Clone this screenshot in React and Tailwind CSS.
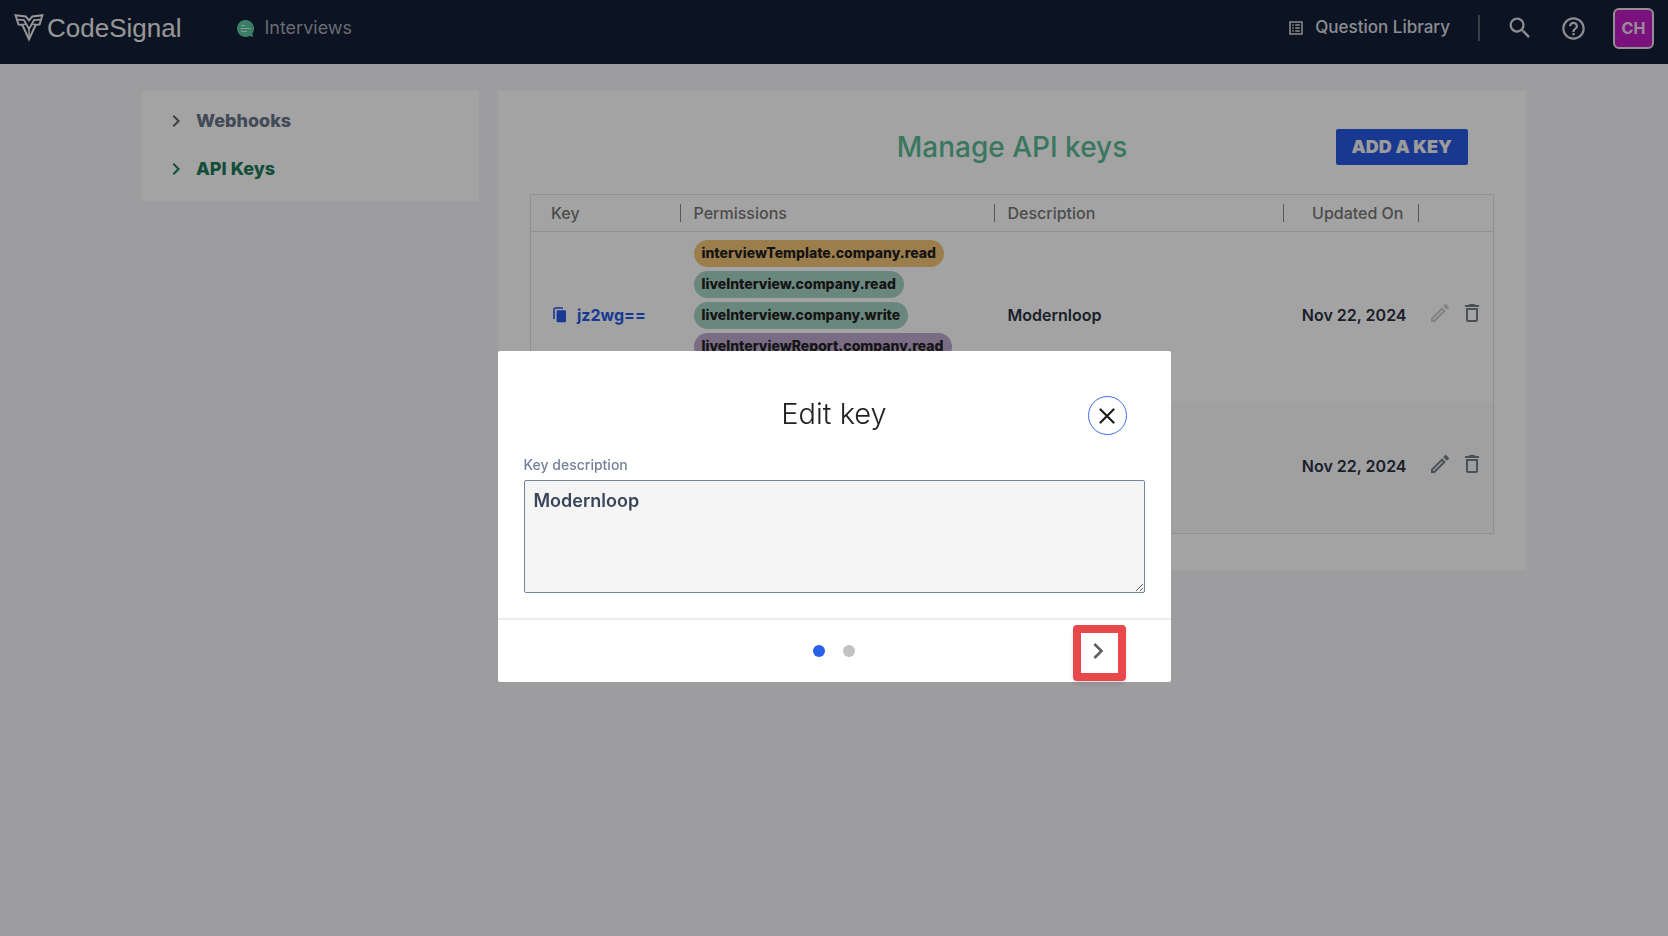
import React from 'react';
import { MdChevronRight, MdDeleteOutline, MdHelpOutline, MdOutlineEdit, MdOutlineListAlt, MdSearch } from 'react-icons/md';

const keys = [
  {
    id: 'jz2wg==',
    description: 'Modernloop',
    updatedOn: 'Nov 22, 2024',
    editDisabled: true,
    permissions: [
      { name: 'interviewTemplate.company.read', color: 'bg-[#f3c578]' },
      { name: 'liveInterview.company.read', color: 'bg-[#a6d3c4]' },
      { name: 'liveInterview.company.write', color: 'bg-[#a6d3c4]' },
      { name: 'liveInterviewReport.company.read', color: 'bg-[#bda9cf]' },
    ],
  },
  { id: '', description: '', updatedOn: 'Nov 22, 2024', permissions: [] },
];

function Logo() {
  return (
    <a href="#home" className="flex items-center gap-[3px] text-[#ececec]">
      <svg viewBox="0 0 30 28" className="h-7 w-[30px]" fill="none" stroke="currentColor" strokeWidth="2" aria-hidden="true">
        <path d="M1.6 1.2 L11.6 2.4 L15 6.4 L18.4 2.4 L28.4 1.2 L25.6 10.4 L21.6 11 L15 25.4 L8.4 11 L4.4 10.4 Z" />
        <path d="M3.4 5.6 L10 6.2 L15 15 L20 6.2 L26.6 5.6" strokeWidth="1.8" />
        <path d="M8 10.6 L12.2 10.2 M22 10.6 L17.8 10.2 M15 14.6 V24" strokeWidth="1.5" />
      </svg>
      <span className="font-['Liberation_Sans',sans-serif] text-[26px] leading-7">CodeSignal</span>
    </a>
  );
}

function Navbar() {
  return (
    <header className="flex h-16 items-start justify-between bg-[#141e36] px-[14px]">
      <div className="flex h-14 items-center gap-14">
        <Logo />
        <a href="#interviews" className="flex items-center gap-[10px] text-lg text-[#a3a7b3]">
          <svg viewBox="0 0 17 17" className="size-[17px]" aria-hidden="true">
            <path d="M8.5 0a8.5 8.5 0 1 0 4 16L16 17l-.6-3.6A8.5 8.5 0 0 0 8.5 0Z" fill="#5cc5a0" />
            <path d="M4 5.5h4M3.5 8.5h10M4 11.5h6" stroke="#d3efe5" strokeWidth="1.2" />
          </svg>
          Interviews
        </a>
      </div>
      <div className="flex h-14 items-center text-[#dcdde0]">
        <a href="#library" className="flex items-center gap-[10px] text-[17px] font-medium">
          <MdOutlineListAlt className="size-[18px]" />
          Question Library
        </a>
        <span className="ml-7 h-[26px] w-[2px] bg-[#5b6273]" />
        <button type="button" aria-label="Search" className="ml-[26px]">
          <MdSearch className="size-7" />
        </button>
        <button type="button" aria-label="Help" className="ml-[26px]">
          <MdHelpOutline className="size-[27px]" />
        </button>
        <button
          type="button"
          className="ml-[26px] size-[41px] rounded-md border-2 border-[#e4dfe6] bg-[#bf1cc2] text-base font-bold text-[#eedcf0]"
        >
          CH
        </button>
      </div>
    </header>
  );
}

function Sidebar() {
  return (
    <nav className="flex w-[337px] shrink-0 flex-col gap-5 self-start bg-white px-[22px] pt-4 pb-[18px] text-lg leading-7 font-extrabold">
      <a href="#webhooks" className="flex items-center gap-2 text-[#68748a]">
        <MdChevronRight className="size-6 text-[#5d636e]" />
        Webhooks
      </a>
      <a href="#api-keys" className="flex items-center gap-2 text-[#1f7a58]">
        <MdChevronRight className="size-6" />
        API Keys
      </a>
    </nav>
  );
}

function HeaderCell({ children, className }) {
  return (
    <th scope="col" className="h-[37px] p-0 font-medium">
      <div className={`flex h-[18px] items-center border-r border-[#8a8a8a] ${className}`}>{children}</div>
    </th>
  );
}

function KeysTable() {
  return (
    <table className="w-full table-fixed border-collapse border border-[#e2e2e2] text-left text-base leading-6 text-[#2a3140]">
      <colgroup>
        <col className="w-[150px]" />
        <col className="w-[314px]" />
        <col />
        <col className="w-[135px]" />
        <col className="w-[75px]" />
      </colgroup>
      <thead className="border-b border-[#e2e2e2] text-[#777777]">
        <tr>
          <HeaderCell className="pl-5">Key</HeaderCell>
          <HeaderCell className="pl-[13px]">Permissions</HeaderCell>
          <HeaderCell className="pl-[13px]">Description</HeaderCell>
          <HeaderCell className="justify-end pr-[14px]">Updated On</HeaderCell>
          <th aria-label="Actions" />
        </tr>
      </thead>
      <tbody>
        {keys.map((k, i) => (
          <tr key={i} className={i % 2 === 0 ? 'h-[171px]' : 'h-[131px] bg-[#fafafa]'}>
            <td className="pb-1 pl-[22px]">
              {k.id && (
                <a href="#key" className="flex items-center gap-[10px] font-bold text-[#2459e8]">
                  <svg viewBox="0 0 14 16" className="h-4 w-[14px]" aria-hidden="true">
                    <path d="M1 12V2.5Q1 1 2.5 1H10" fill="none" stroke="currentColor" strokeWidth="1.6" />
                    <rect x="3.6" y="3.2" width="9.4" height="12" rx="1.2" fill="currentColor" />
                  </svg>
                  {k.id}
                </a>
              )}
            </td>
            <td className="pt-2 pl-[13px] align-top">
              <ul className="flex flex-col items-start gap-1">
                {k.permissions.map((p) => (
                  <li key={p.name} className={`h-[27px] rounded-full px-2 text-sm leading-[26px] font-extrabold text-[#222222] ${p.color}`}>
                    {p.name}
                  </li>
                ))}
              </ul>
            </td>
            <td className="pb-1 pl-[13px] font-semibold">{k.description}</td>
            <td className="pr-3 pb-1 text-right font-semibold">{k.updatedOn}</td>
            <td>
              <div className="flex items-center justify-center gap-2 pb-2 text-[#777e8b]">
                <button type="button" aria-label="Edit key" disabled={k.editDisabled} className="disabled:text-[#cbcbcb]">
                  <MdOutlineEdit className="size-6" />
                </button>
                <button type="button" aria-label="Delete key">
                  <MdDeleteOutline className="size-6" />
                </button>
              </div>
            </td>
          </tr>
        ))}
      </tbody>
    </table>
  );
}

function EditKeyModal() {
  return (
    <div className="fixed inset-0 flex items-start justify-center bg-black/36 pt-[351px]">
      <div role="dialog" aria-labelledby="edit-title" className="w-full max-w-[673px] rounded-xs bg-white">
        <div className="px-[26px] pt-[45px] pb-[25px]">
          <div className="grid grid-cols-[1fr_auto_1fr] items-center">
            <h2 id="edit-title" className="col-start-2 pb-[3px] text-[29px] leading-9 font-light text-[#222222]">
              Edit key
            </h2>
            <button
              type="button"
              aria-label="Close"
              className="mr-[18px] flex size-[39px] items-center justify-center justify-self-end rounded-full border border-[#3f6fe8]"
            >
              <svg viewBox="0 0 16 16" className="size-4" fill="none" stroke="#1d1d1d" strokeWidth="2.2" strokeLinecap="round" aria-hidden="true">
                <path d="M1.5 1.5l13 13M14.5 1.5l-13 13" />
              </svg>
            </button>
          </div>
          <label htmlFor="description" className="mt-5 mb-[5px] block text-sm leading-5 font-medium text-[#74809a]">
            Key description
          </label>
          <textarea
            id="description"
            defaultValue="Modernloop"
            className="block h-[113px] w-full resize rounded-xs border border-[#75849f] bg-[#f5f5f5] px-[9px] py-2 text-lg leading-6 font-semibold text-[#39455a]"
          />
        </div>
        <footer className="grid h-16 grid-cols-[1fr_auto_1fr] items-center border-t-2 border-[#ececec]">
          <div className="col-start-2 flex gap-[18px]">
            <span className="size-3 rounded-full bg-[#2a5fea]" />
            <span className="size-3 rounded-full bg-[#c2c2c2]" />
          </div>
          <button
            type="button"
            aria-label="Next"
            className="mt-[3px] mr-[45px] flex h-14 w-[53px] items-center justify-center justify-self-end rounded-sm border-8 border-[#e8474c] pr-[2px] pb-1 text-[#5f5f5f] shadow-md"
          >
            <MdChevronRight className="size-8 shrink-0" />
          </button>
        </footer>
      </div>
    </div>
  );
}

export default function App() {
  return (
    <div className="min-h-screen bg-[#f6f6f9] font-['Inter',sans-serif]">
      <Navbar />
      <main className="mx-auto flex max-w-[1384px] gap-[19px] pt-[27px]">
        <Sidebar />
        <section className="min-w-0 flex-1 bg-white px-8 pt-[38px] pb-9">
          <div className="mb-[29px] grid grid-cols-[1fr_auto_1fr] items-center">
            <h1 className="col-start-2 text-[28px] leading-9 font-medium text-[#5cba95]">Manage API keys</h1>
            <button
              type="button"
              className="mr-[26px] h-9 justify-self-end rounded-xs bg-[#2858e0] px-4 text-lg font-black text-[#f2f2f2]"
            >
              ADD A KEY
            </button>
          </div>
          <KeysTable />
        </section>
      </main>
      <EditKeyModal />
    </div>
  );
}
